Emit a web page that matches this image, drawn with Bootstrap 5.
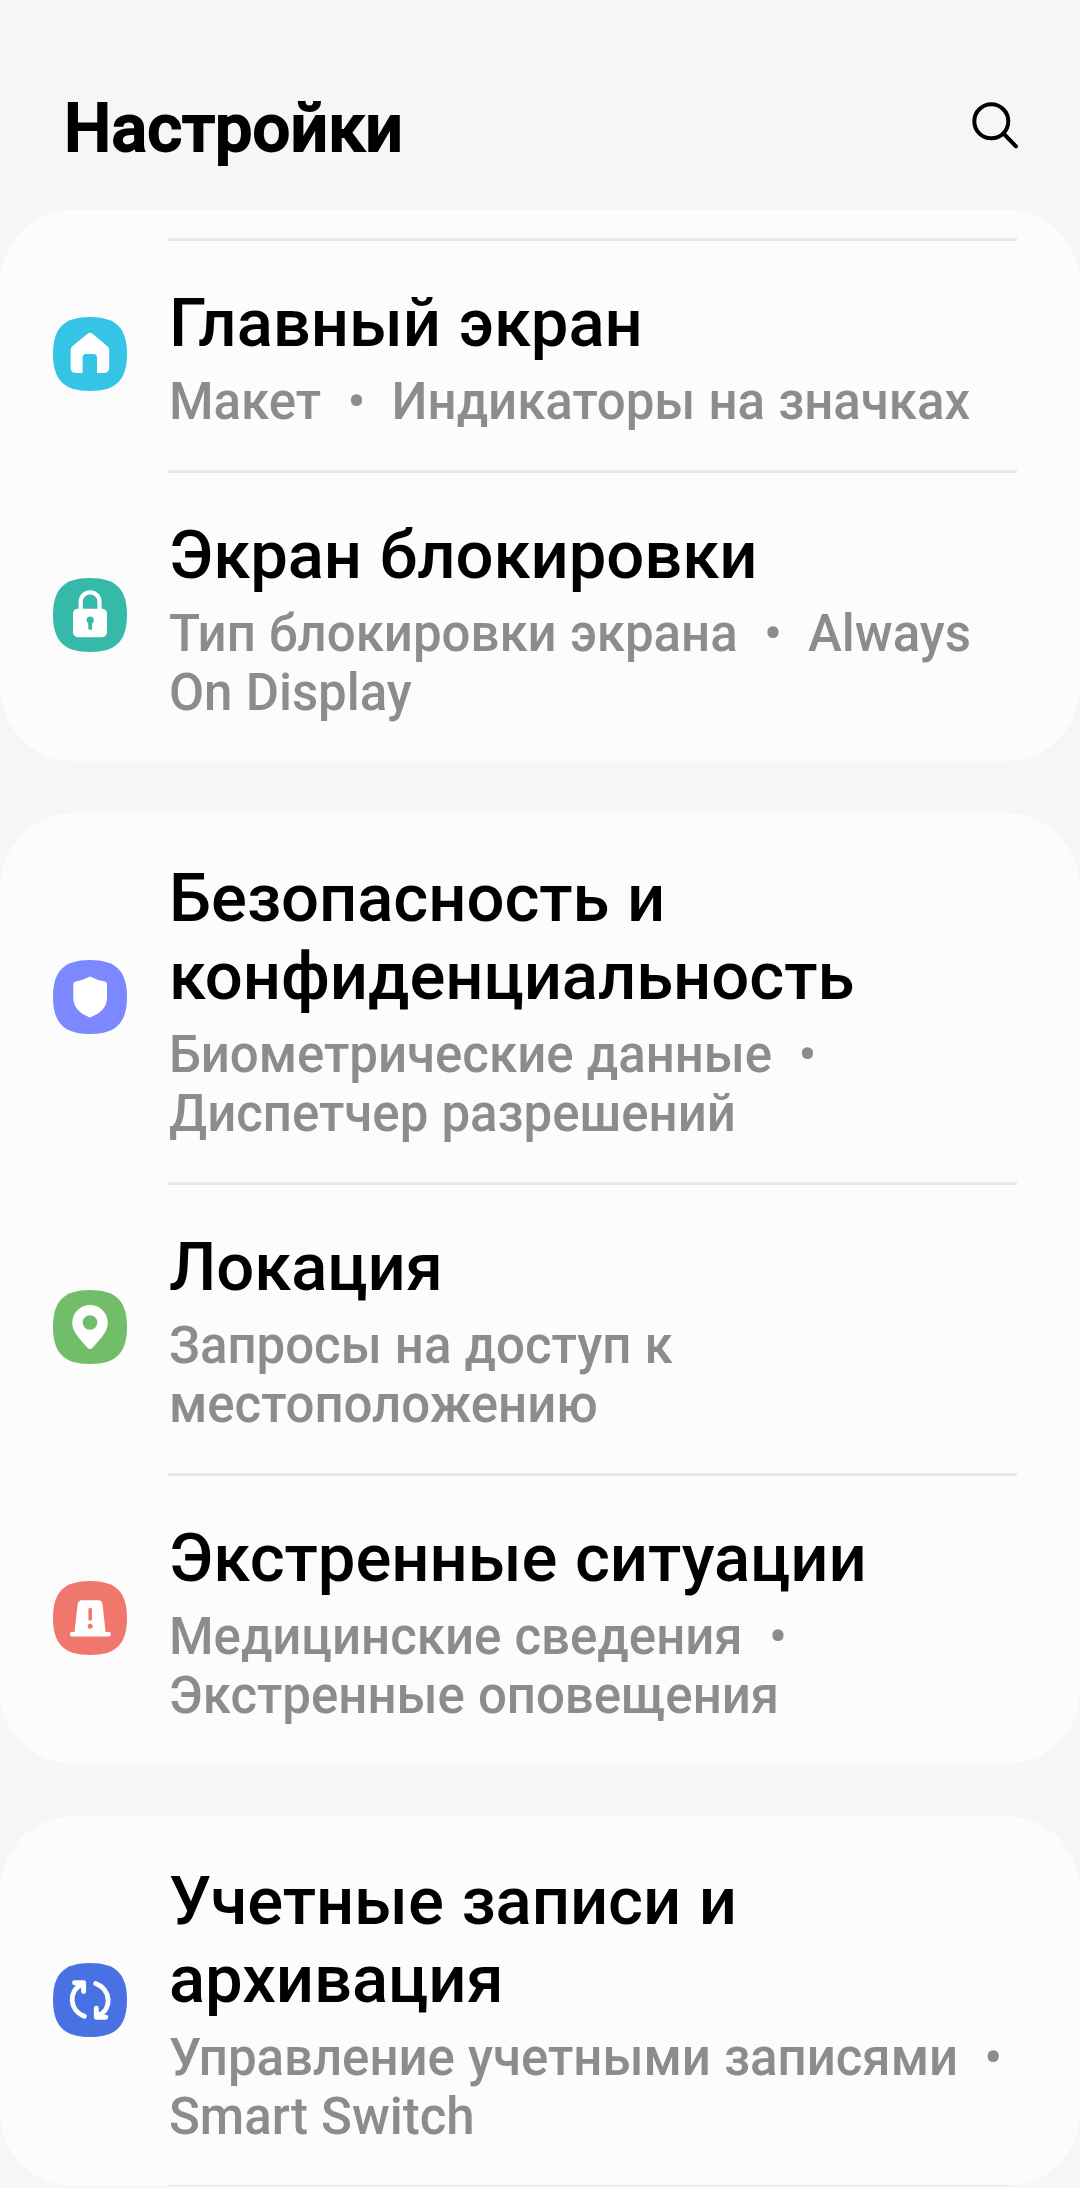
<!DOCTYPE html>
<html lang="ru">
<head>
<meta charset="utf-8">
<meta name="viewport" content="width=device-width, initial-scale=1">
<title>Настройки</title>
<link href="https://cdn.jsdelivr.net/npm/bootstrap@5.3.0/dist/css/bootstrap.min.css" rel="stylesheet">
<style>
  body { background: #f6f6f6; font-family: Roboto, "Noto Sans", sans-serif; color: #000; height: 2188px; overflow: hidden; }
  .topbar { height: 210px; padding: 88px 58px 0 64px; }
  .page-title { font-size: 66.6px; line-height: 80px; font-weight: 500; -webkit-text-stroke: 2px #000; }
  .search-btn { margin-top: 8px; }
  .groups { gap: 52px; }
  .settings-group { background: #fcfcfc; border-radius: 74px; --bs-list-group-bg: transparent; }
  .settings-group.scrolled { padding-top: 28px; }
  .settings-group.cut { height: 370px; overflow: hidden; }
  .entry { padding: 0 63px 0 53px; gap: 41px; background: transparent; color: #000; }
  .entry-icon { width: 74px; height: 74px; margin-bottom: 1px; }
  .entry-text { position: relative; padding: 46px 0 39px 1px; margin-right: -15px; }
  .entry.ruled .entry-text::before, .rule-end::before { content: ""; position: absolute; top: 0; left: 0; width: 849px; height: 3px; background: #e8e8e8; }
  .entry-name { font-size: 67px; line-height: 78px; font-weight: 500; margin-bottom: 10px; letter-spacing: -0.05px; word-spacing: 1px; }
  .entry-hint { font-size: 51px; line-height: 59px; font-weight: 500; color: #8c8c8c; white-space: pre; letter-spacing: -0.02px; word-spacing: 0.5px; }
  .rule-end { position: relative; margin-left: 168px; }
</style>
<script src="https://cdn.jsdelivr.net/npm/bootstrap@5.3.0/dist/js/bootstrap.bundle.min.js"></script>
</head>
<body>
<svg class="d-none"><symbol id="tile" viewBox="0 0 74 74"><path d="M37 0C63 0 74 11 74 37S63 74 37 74 0 63 0 37 11 0 37 0Z"/></symbol></svg>
<header class="topbar d-flex justify-content-between align-items-start">
  <h1 class="page-title m-0">Настройки</h1>
  <button class="search-btn btn border-0 p-0" aria-label="Поиск">
    <svg class="d-block overflow-visible" width="52" height="52" viewBox="0 0 52 52" fill="none" stroke="#000" stroke-width="4" stroke-linecap="round"><circle cx="21.3" cy="25.3" r="17"/><path d="M33.500 37.500 46 50.300"/></svg>
  </button>
</header>
<main class="groups d-flex flex-column">
  <section class="settings-group scrolled list-group list-group-flush">
    <div class="entry ruled d-flex align-items-center">
      <svg class="entry-icon flex-shrink-0 mb-0"><use href="#tile" fill="#33c4e6"/><path fill="#fff" d="M34.8 16.6Q37 14.900 39.200 16.600L54.200 29Q56.200 30.700 56.200 33V50.500Q56.200 56 50.500 56H44V40.500Q44 37 40.500 37H33Q29.600 37 29.600 40.500V56H23.300Q17.600 56 17.600 50.500V33Q17.600 30.700 19.600 29Z"/></svg>
      <div class="entry-text flex-grow-1"><div class="entry-name">Главный экран</div><div class="entry-hint">Макет  •  Индикаторы на значках</div></div>
    </div>
    <div class="entry ruled d-flex align-items-center">
      <svg class="entry-icon flex-shrink-0"><use href="#tile" fill="#37b9aa"/><path fill="none" stroke="#fff" stroke-width="4.200" d="M27.700 33V23.700a9.400 9.400 0 0 1 18.800 0V33"/><rect x="20" y="30.700" width="34" height="28.500" rx="5" fill="#fff"/><circle cx="37.200" cy="42" r="3.600" fill="#37b9aa"/><path stroke="#37b9aa" stroke-width="3.800" stroke-linecap="round" d="M37.200 43v7"/></svg>
      <div class="entry-text flex-grow-1"><div class="entry-name">Экран блокировки</div><div class="entry-hint">Тип блокировки экрана  •  Always
On Display</div></div>
    </div>
  </section>
  <section class="settings-group list-group list-group-flush">
    <div class="entry d-flex align-items-center">
      <svg class="entry-icon flex-shrink-0"><use href="#tile" fill="#7b88ff"/><path fill="#fff" d="M37 16.500Q43.500 20 52 21.500 54 22 54 24V38C54 46.500 48 53.500 37 57.500 26 53.500 20.300 46.500 20.300 38V24Q20.300 22 22.300 21.500 30.500 20 37 16.500Z"/></svg>
      <div class="entry-text flex-grow-1"><div class="entry-name">Безопасность и<br>конфиденциальность</div><div class="entry-hint">Биометрические данные  •
Диспетчер разрешений</div></div>
    </div>
    <div class="entry ruled d-flex align-items-center">
      <svg class="entry-icon flex-shrink-0"><use href="#tile" fill="#72bd69"/><path fill="#fff" fill-rule="evenodd" d="M37 15A17.800 17.800 0 0 1 54.800 32.800C54.800 42 46.500 50 39.500 57.700Q37 60.300 34.500 57.700C27.500 50 19.200 42 19.200 32.800A17.800 17.800 0 0 1 37 15ZM37 25.200a7.300 7.300 0 1 0 0 14.600 7.300 7.300 0 0 0 0-14.600Z"/></svg>
      <div class="entry-text flex-grow-1"><div class="entry-name">Локация</div><div class="entry-hint">Запросы на доступ к
местоположению</div></div>
    </div>
    <div class="entry ruled d-flex align-items-center">
      <svg class="entry-icon flex-shrink-0"><use href="#tile" fill="#ef776b"/><path fill="#fff" d="M29 19.300H45.500Q49.200 19.500 49.600 23.500L52.600 51H55.700a2.200 2.200 0 0 1 0 4.400H19a2.200 2.200 0 0 1 0-4.400H21.500L24.600 23.500Q25 19.500 29 19.300Z"/><path stroke="#ef776b" stroke-width="3.600" stroke-linecap="round" d="M37.200 28.500v9.500"/><circle cx="37.200" cy="45.200" r="2.500" fill="#ef776b"/></svg>
      <div class="entry-text flex-grow-1"><div class="entry-name">Экстренные ситуации</div><div class="entry-hint">Медицинские сведения  •
Экстренные оповещения</div></div>
    </div>
  </section>
  <section class="settings-group cut list-group list-group-flush">
    <div class="entry d-flex align-items-center">
      <svg class="entry-icon flex-shrink-0"><use href="#tile" fill="#4872e3"/><g fill="none" stroke="#fff" stroke-width="4.900" stroke-linecap="round" stroke-linejoin="round"><path d="M31.300 53.300C16 47.300 15 27.500 29 21.500M21.500 19.800H30.600V28.500M42.700 20.500C58.300 26.500 59.300 46.500 45.300 52.500M52.800 54.200H43.300V45.300"/></g><path fill="#fff" d="M24 20h6.500v7ZM50 54h-6.700v-7Z"/></svg>
      <div class="entry-text flex-grow-1"><div class="entry-name">Учетные записи и<br>архивация</div><div class="entry-hint">Управление учетными записями  •
Smart Switch</div></div>
    </div>
    <div class="rule-end"></div>
  </section>
</main>
</body>
</html>
